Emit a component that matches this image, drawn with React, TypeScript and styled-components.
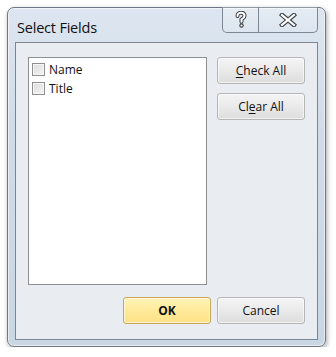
import styled, { createGlobalStyle } from 'styled-components';

const GlobalStyle = createGlobalStyle`
  html, body {
    margin: 0;
    padding: 0;
    background: #ffffff;
    font-family: "Open Sans", "Noto Sans", sans-serif;
  }
`;

const Window = styled.div`
  margin: 7px 0 0 7px;
  width: 319px;
  height: 340px;
  box-sizing: border-box;
  border: 1px solid #6f7782;
  border-radius: 7px;
  background: linear-gradient(180deg, #dde6f0 0%, #cfdbe8 40%, #c9d6e4 100%);
  box-shadow: 1px 2px 5px rgba(0, 0, 0, 0.35), inset 0 0 0 1px rgba(255, 255, 255, 0.55);
  display: flex;
  flex-direction: column;
  padding: 0 7px 6px 7px;
`;

const TitleBar = styled.div`
  height: 34px;
  display: flex;
  align-items: flex-start;
  justify-content: space-between;
`;

const Title = styled.div`
  font-size: 14.5px;
  color: #111111;
  padding: 10px 0 0 2px;
  letter-spacing: -0.2px;
`;

const Caption = styled.div`
  display: flex;
  margin-top: -1px;
  border: 1px solid #7d8794;
  border-top: none;
  border-radius: 0 0 5px 5px;
  height: 25px;
  overflow: hidden;
  background: linear-gradient(180deg, rgba(255, 255, 255, 0.25), rgba(255, 255, 255, 0.05));
`;

const CaptionButton = styled.div<{ $w: number; $sep?: boolean }>`
  width: ${(p) => p.$w}px;
  height: 25px;
  display: flex;
  align-items: center;
  justify-content: center;
  border-right: ${(p) => (p.$sep ? '1px solid #7d8794' : 'none')};
`;

const Client = styled.div`
  flex: 1;
  border: 1px solid #7c8693;
  background: #e9edf1;
  display: flex;
  flex-direction: column;
  padding: 14px 12px 15px 12px;
`;

const Body = styled.div`
  flex: 1;
  display: flex;
  justify-content: space-between;
`;

const ListBox = styled.div`
  width: 179px;
  box-sizing: border-box;
  border: 1px solid #8e8f8f;
  background: #ffffff;
  padding: 5px 3px;
  display: flex;
  flex-direction: column;
  gap: 6px;
`;

const Item = styled.label`
  display: flex;
  align-items: center;
  gap: 4px;
  font-size: 12px;
  color: #111111;
  height: 13px;
`;

const Box = styled.span`
  width: 11px;
  height: 11px;
  border: 1px solid #8f8f8f;
  background: linear-gradient(135deg, #dcdcdc, #f4f4f4);
  box-shadow: inset 0 0 0 1px #f7f7f7;
`;

const Side = styled.div`
  display: flex;
  flex-direction: column;
  gap: 9px;
`;

const Button = styled.div<{ $primary?: boolean }>`
  width: 88px;
  height: 27px;
  box-sizing: border-box;
  border-radius: 3px;
  display: flex;
  align-items: center;
  justify-content: center;
  font-size: 12px;
  color: #111111;
  font-weight: ${(p) => (p.$primary ? 700 : 400)};
  border: 1px solid ${(p) => (p.$primary ? '#c9a55c' : '#b5b5b5')};
  background: ${(p) =>
    p.$primary
      ? 'linear-gradient(180deg, #fff4b8 0%, #ffeb9c 45%, #fde286 100%)'
      : 'linear-gradient(180deg, #f4f4f4 0%, #ebebeb 45%, #dddddd 100%)'};
  box-shadow: inset 0 0 0 1px rgba(255, 255, 255, 0.6);

  u {
    text-decoration: underline;
    text-underline-offset: 2px;
  }
`;

const Footer = styled.div`
  display: flex;
  justify-content: flex-end;
  gap: 6px;
  margin-top: 12px;
`;

const HelpIcon = () => (
  <svg width="14" height="18" viewBox="0 0 14 18">
    <path
      d="M3.5 5 C3.5 2.8 5 1.8 7 1.8 C9.1 1.8 10.5 3 10.5 5 C10.5 6.8 8.8 7.4 7.5 8.4 L7.5 10.8"
      fill="none"
      stroke="#3b3f45"
      strokeWidth="4"
      strokeLinecap="round"
    />
    <path
      d="M3.5 5 C3.5 2.8 5 1.8 7 1.8 C9.1 1.8 10.5 3 10.5 5 C10.5 6.8 8.8 7.4 7.5 8.4 L7.5 10.8"
      fill="none"
      stroke="#ffffff"
      strokeWidth="2"
      strokeLinecap="round"
    />
    <circle cx="7.5" cy="14.5" r="2.2" fill="#3b3f45" />
    <circle cx="7.5" cy="14.5" r="1.1" fill="#ffffff" />
  </svg>
);

const CloseIcon = () => (
  <svg width="18" height="14" viewBox="0 0 18 14">
    <path d="M3 2 L15 12 M15 2 L3 12" stroke="#3b3f45" strokeWidth="4.4" strokeLinecap="square" />
    <path d="M3 2 L15 12 M15 2 L3 12" stroke="#ffffff" strokeWidth="2.2" strokeLinecap="square" />
  </svg>
);

const App = () => {
  return (
    <>
      <GlobalStyle />
      <Window>
        <TitleBar>
          <Title>Select Fields</Title>
          <Caption>
            <CaptionButton $w={35} $sep>
              <HelpIcon />
            </CaptionButton>
            <CaptionButton $w={58}>
              <CloseIcon />
            </CaptionButton>
          </Caption>
        </TitleBar>
        <Client>
          <Body>
            <ListBox>
              <Item>
                <Box />
                Name
              </Item>
              <Item>
                <Box />
                Title
              </Item>
            </ListBox>
            <Side>
              <Button>
                <u>C</u>heck All
              </Button>
              <Button>
                Cl<u>e</u>ar All
              </Button>
            </Side>
          </Body>
          <Footer>
            <Button $primary>OK</Button>
            <Button>Cancel</Button>
          </Footer>
        </Client>
      </Window>
    </>
  );
};

export default App;
